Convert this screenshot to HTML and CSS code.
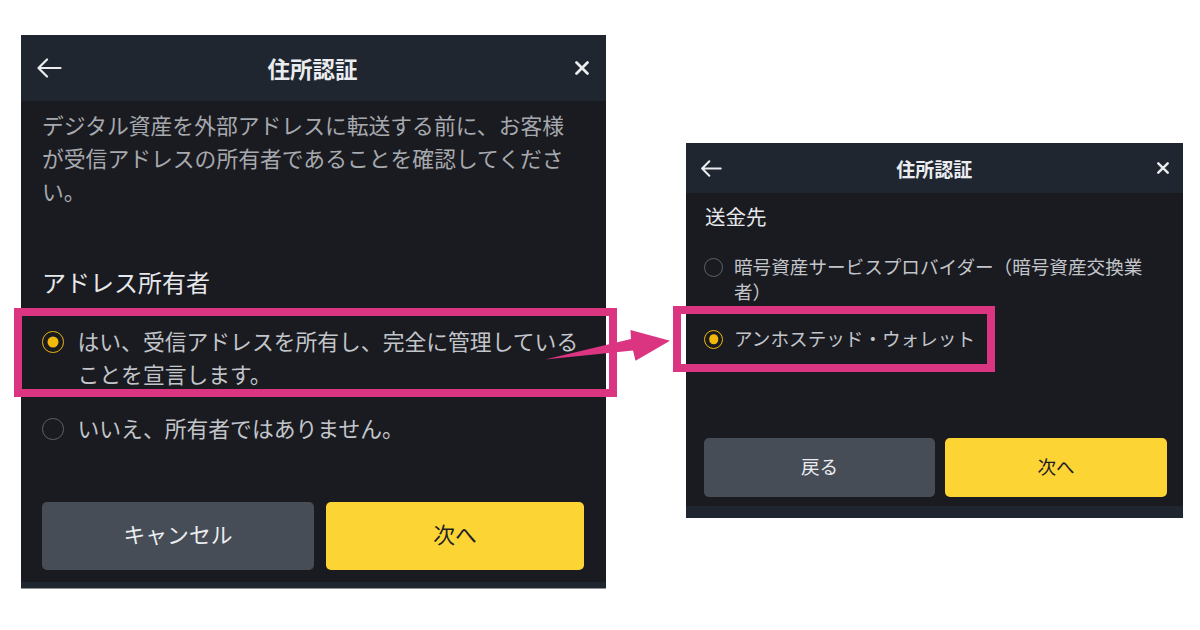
FILE: index.html
```html
<!DOCTYPE html>
<html lang="ja">
<head>
<meta charset="utf-8">
<title>住所認証</title>
<link rel="stylesheet" href="styles.css">
</head>
<body>
<div class="stage">
  <section class="panel panel-l">
    <header class="hdr">
      <svg class="ic-back" viewBox="0 0 26 20"><path d="M24.5 10H2.5M11 1.5L2.5 10L11 18.5" fill="none" stroke="#eaecef" stroke-width="2.2" stroke-linecap="round" stroke-linejoin="round"/></svg>
      <h1 class="title">住所認証</h1>
      <svg class="ic-close" viewBox="0 0 14 14"><path d="M1.5 1.5L12.5 12.5M12.5 1.5L1.5 12.5" fill="none" stroke="#eaecef" stroke-width="2.7" stroke-linecap="round"/></svg>
    </header>
    <div class="body">
      <p class="desc">デジタル資産を外部アドレスに転送する前に、お客様<br>が受信アドレスの所有者であることを確認してくださ<br>い。</p>
      <h2 class="label">アドレス所有者</h2>
      <div class="opt opt-1">
        <span class="radio on"></span>
        <span class="opt-text">はい、受信アドレスを所有し、完全に管理している<br>ことを宣言します。</span>
      </div>
      <div class="opt opt-2">
        <span class="radio"></span>
        <span class="opt-text">いいえ、所有者ではありません。</span>
      </div>
      <div class="btns">
        <button class="btn btn-gray">キャンセル</button>
        <button class="btn btn-yellow">次へ</button>
      </div>
    </div>
    <div class="strip"></div>
  </section>

  <section class="panel panel-r">
    <header class="hdr">
      <svg class="ic-back" viewBox="0 0 26 20"><path d="M24.5 10H2.5M11 1.5L2.5 10L11 18.5" fill="none" stroke="#eaecef" stroke-width="2.4" stroke-linecap="round" stroke-linejoin="round"/></svg>
      <h1 class="title">住所認証</h1>
      <svg class="ic-close" viewBox="0 0 14 14"><path d="M1.5 1.5L12.5 12.5M12.5 1.5L1.5 12.5" fill="none" stroke="#eaecef" stroke-width="2.8" stroke-linecap="round"/></svg>
    </header>
    <div class="body">
      <h2 class="label">送金先</h2>
      <div class="opt opt-1">
        <span class="radio"></span>
        <span class="opt-text">暗号資産サービスプロバイダー（暗号資産交換業<br>者）</span>
      </div>
      <div class="opt opt-2">
        <span class="radio on"></span>
        <span class="opt-text">アンホステッド・ウォレット</span>
      </div>
      <div class="btns">
        <button class="btn btn-gray">戻る</button>
        <button class="btn btn-yellow">次へ</button>
      </div>
    </div>
    <div class="strip"></div>
  </section>

  <div class="mark mark-l"></div>
  <div class="mark mark-r"></div>
  <svg class="arrow" viewBox="0 0 140 50"><polygon points="5,39.5 91,19 90.5,10 130,20.7 95.5,40.7 93,30.5" fill="#db3581"/></svg>
</div>
</body>
</html>
```

FILE: styles.css
```css
* { box-sizing: border-box; margin: 0; padding: 0; }

html, body {
  width: 1200px;
  height: 630px;
  overflow: hidden;
  background: #ffffff;
  font-family: "Noto Sans CJK JP", "Noto Sans", sans-serif;
}

.stage {
  position: relative;
  width: 1200px;
  height: 630px;
  display: flex;
  align-items: flex-start;
  padding-left: 21px;
}

.panel {
  display: flex;
  flex-direction: column;
  background: #1a1b20;
}

.hdr {
  display: grid;
  grid-template-columns: 1fr auto 1fr;
  align-items: center;
  background: #1f2630;
}

.title {
  color: #eaecef;
  font-weight: 700;
  text-align: center;
  line-height: 1;
}

.ic-close { justify-self: end; display: block; }
.ic-back { display: block; }

.body { display: flex; flex-direction: column; }

.desc { color: #a6a9ae; }

.label { color: #e6e8eb; font-weight: 400; }

.opt { display: flex; align-items: flex-start; }

.opt-text { color: #c2c5ca; }

.radio {
  flex: none;
  border-radius: 50%;
  border: 1.6px solid #5a616c;
  position: relative;
}

.radio.on { border-color: #f0b90b; }

.radio.on::after {
  content: "";
  position: absolute;
  left: 50%;
  top: 50%;
  border-radius: 50%;
  background: #f0b90b;
  transform: translate(-50%, -50%);
}

.btns { display: flex; }

.btn {
  border: none;
  border-radius: 5px;
  font-family: inherit;
  display: flex;
  align-items: center;
  justify-content: center;
}

.btn-gray { background: #474d57; color: #eaecef; }
.btn-yellow { background: #fcd535; color: #1e2026; }

.strip { background: #1f2630; }

/* ---------- left panel ---------- */
.panel-l {
  width: 585px;
  margin-top: 35px;
  border-bottom: 1px solid #8e9297;
}

.panel-l .hdr { height: 66px; padding: 0 17px 0 15px; }
.panel-l .ic-back { width: 26px; height: 20px; }
.panel-l .ic-close { width: 14px; height: 14px; }
.panel-l .title { font-size: 22.5px; }

.panel-l .body { padding: 7px 22px 12.5px 21px; }
.panel-l .desc { font-size: 21.8px; line-height: 33px; }
.panel-l .label { font-size: 24px; line-height: 34px; margin-top: 58px; }
.panel-l .opt { gap: 14px; }
.panel-l .opt-1 { margin-top: 24.5px; }
.panel-l .opt-2 { margin-top: 21px; }
.panel-l .opt-text { font-size: 21.8px; line-height: 33px; }
.panel-l .radio { width: 21.5px; height: 21.5px; margin-top: 7.8px; }
.panel-l .radio.on::after { width: 11px; height: 11px; }
.panel-l .btns { margin-top: 58.5px; gap: 12px; }
.panel-l .btn { height: 67.5px; font-size: 21.8px; padding-bottom: 5px; }
.panel-l .btn-gray { width: 272px; }
.panel-l .btn-yellow { width: 258px; }
.panel-l .strip { height: 6px; }

/* ---------- right panel ---------- */
.panel-r {
  width: 497px;
  margin-top: 143px;
  margin-left: 80px;
}

.panel-r .hdr { height: 50px; padding: 0 14px 0 13.5px; }
.panel-r .ic-back { width: 22px; height: 17px; }
.panel-r .ic-close { width: 12px; height: 12px; }
.panel-r .title { font-size: 19px; }

.panel-r .body { padding: 9px 16px 9px 18px; }
.panel-r .label { font-size: 20.5px; line-height: 28px; padding-left: 1px; }
.panel-r .opt { gap: 11px; }
.panel-r .opt-1 { margin-top: 22.5px; }
.panel-r .opt-2 { margin-top: 22.3px; }
.panel-r .opt-text { font-size: 18.6px; line-height: 25px; }
.panel-r .radio { width: 19px; height: 19px; margin-top: 5px; }
.panel-r .radio.on::after { width: 9.5px; height: 9.5px; }
.panel-r .btns { margin-top: 88.5px; gap: 10px; }
.panel-r .btn { height: 58.5px; font-size: 18.6px; padding-bottom: 5px; }
.panel-r .btn-gray { width: 231px; }
.panel-r .btn-yellow { width: 222px; }
.panel-r .strip { height: 12px; }

/* ---------- annotations ---------- */
.mark {
  position: absolute;
  border: 8px solid #db3581;
}

.mark-l { left: 14px; top: 308px; width: 603px; height: 89px; }
.mark-r { left: 673px; top: 306px; width: 322px; height: 66px; }

.arrow {
  position: absolute;
  left: 540px;
  top: 320px;
  width: 140px;
  height: 50px;
}
```
